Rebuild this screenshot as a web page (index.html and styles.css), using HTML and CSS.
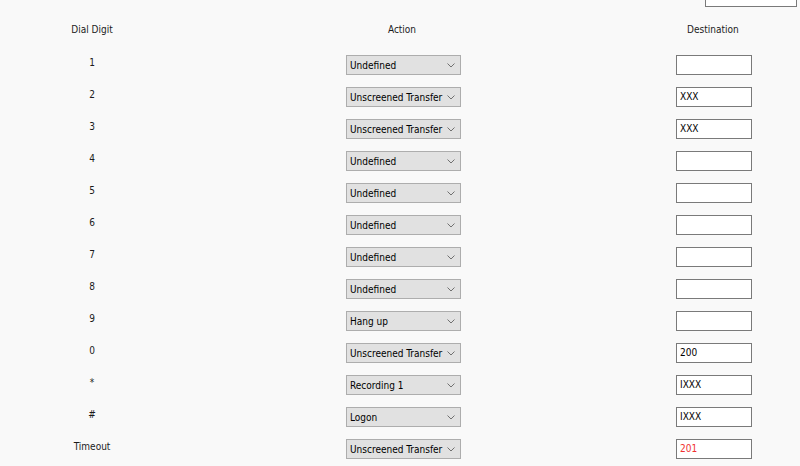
FILE: index.html
```html
<!DOCTYPE html>
<html>
<head>
<meta charset="utf-8">
<link rel="stylesheet" href="styles.css">
</head>
<body>
<div class="topbar"><div class="topbox"></div></div>
<div class="grid">
  <div class="hdr c1">Dial Digit</div>
  <div class="hdr c2">Action</div>
  <div class="hdr c3">Destination</div>

  <div class="lbl">1</div>
  <div class="sel"><span>Undefined</span><svg class="chev" width="8" height="5" viewBox="0 0 8 5"><path d="M0.5 0.5 L4 4 L7.5 0.5" fill="none" stroke="#707070" stroke-width="1"/></svg></div>
  <div class="dst"><div class="inp"></div></div>

  <div class="lbl">2</div>
  <div class="sel"><span>Unscreened Transfer</span><svg class="chev" width="8" height="5" viewBox="0 0 8 5"><path d="M0.5 0.5 L4 4 L7.5 0.5" fill="none" stroke="#707070" stroke-width="1"/></svg></div>
  <div class="dst"><div class="inp">XXX</div></div>

  <div class="lbl">3</div>
  <div class="sel"><span>Unscreened Transfer</span><svg class="chev" width="8" height="5" viewBox="0 0 8 5"><path d="M0.5 0.5 L4 4 L7.5 0.5" fill="none" stroke="#707070" stroke-width="1"/></svg></div>
  <div class="dst"><div class="inp">XXX</div></div>

  <div class="lbl">4</div>
  <div class="sel"><span>Undefined</span><svg class="chev" width="8" height="5" viewBox="0 0 8 5"><path d="M0.5 0.5 L4 4 L7.5 0.5" fill="none" stroke="#707070" stroke-width="1"/></svg></div>
  <div class="dst"><div class="inp"></div></div>

  <div class="lbl">5</div>
  <div class="sel"><span>Undefined</span><svg class="chev" width="8" height="5" viewBox="0 0 8 5"><path d="M0.5 0.5 L4 4 L7.5 0.5" fill="none" stroke="#707070" stroke-width="1"/></svg></div>
  <div class="dst"><div class="inp"></div></div>

  <div class="lbl">6</div>
  <div class="sel"><span>Undefined</span><svg class="chev" width="8" height="5" viewBox="0 0 8 5"><path d="M0.5 0.5 L4 4 L7.5 0.5" fill="none" stroke="#707070" stroke-width="1"/></svg></div>
  <div class="dst"><div class="inp"></div></div>

  <div class="lbl">7</div>
  <div class="sel"><span>Undefined</span><svg class="chev" width="8" height="5" viewBox="0 0 8 5"><path d="M0.5 0.5 L4 4 L7.5 0.5" fill="none" stroke="#707070" stroke-width="1"/></svg></div>
  <div class="dst"><div class="inp"></div></div>

  <div class="lbl">8</div>
  <div class="sel"><span>Undefined</span><svg class="chev" width="8" height="5" viewBox="0 0 8 5"><path d="M0.5 0.5 L4 4 L7.5 0.5" fill="none" stroke="#707070" stroke-width="1"/></svg></div>
  <div class="dst"><div class="inp"></div></div>

  <div class="lbl">9</div>
  <div class="sel"><span>Hang up</span><svg class="chev" width="8" height="5" viewBox="0 0 8 5"><path d="M0.5 0.5 L4 4 L7.5 0.5" fill="none" stroke="#707070" stroke-width="1"/></svg></div>
  <div class="dst"><div class="inp"></div></div>

  <div class="lbl">0</div>
  <div class="sel"><span>Unscreened Transfer</span><svg class="chev" width="8" height="5" viewBox="0 0 8 5"><path d="M0.5 0.5 L4 4 L7.5 0.5" fill="none" stroke="#707070" stroke-width="1"/></svg></div>
  <div class="dst"><div class="inp">200</div></div>

  <div class="lbl">*</div>
  <div class="sel"><span>Recording 1</span><svg class="chev" width="8" height="5" viewBox="0 0 8 5"><path d="M0.5 0.5 L4 4 L7.5 0.5" fill="none" stroke="#707070" stroke-width="1"/></svg></div>
  <div class="dst"><div class="inp">IXXX</div></div>

  <div class="lbl">#</div>
  <div class="sel"><span>Logon</span><svg class="chev" width="8" height="5" viewBox="0 0 8 5"><path d="M0.5 0.5 L4 4 L7.5 0.5" fill="none" stroke="#707070" stroke-width="1"/></svg></div>
  <div class="dst"><div class="inp">IXXX</div></div>

  <div class="lbl">Timeout</div>
  <div class="sel"><span>Unscreened Transfer</span><svg class="chev" width="8" height="5" viewBox="0 0 8 5"><path d="M0.5 0.5 L4 4 L7.5 0.5" fill="none" stroke="#707070" stroke-width="1"/></svg></div>
  <div class="dst"><div class="inp red">201</div></div>
</div>
</body>
</html>
```
FILE: styles.css
```css
html, body {
  margin: 0;
  padding: 0;
  background: #f9f9f9;
  font-family: "DejaVu Sans Condensed", "Liberation Sans", Arial, sans-serif;
  font-size: 10px;
  color: #1b1b1b;
  overflow: hidden;
}
.topbar {
  display: flex;
  justify-content: flex-end;
  padding-right: 3px;
}
.topbox {
  width: 90px;
  height: 6px;
  border: 1px solid #7a7a7a;
  border-top: none;
  background: #fff;
}
.grid {
  display: grid;
  grid-template-columns: 184px 439px 1fr;
  grid-template-rows: 32px;
  grid-auto-rows: 32px;
  margin-top: 16px;
}
.hdr {
  line-height: 13px;
  height: 13px;
  white-space: nowrap;
}
.hdr.c1, .hdr.c2 { text-align: center; }
.hdr.c2 { padding-right: 3px; }
.hdr.c3 { padding-left: 64px; }
.lbl {
  text-align: center;
  line-height: 13px;
  padding-top: 1px;
  white-space: nowrap;
}
.sel {
  justify-self: center;
  height: 18px;
  width: 105px;
  border: 1px solid #adadad;
  background: #e1e1e1;
  display: flex;
  align-items: center;
  padding: 0 5px 0 3px;
  color: #000;
  white-space: nowrap;
  overflow: hidden;
}
.chev { display: block; flex: none; margin-left: auto; }
.dst {
  padding-left: 53px;
}
.inp {
  width: 71px;
  height: 18px;
  border: 1px solid #7a7a7a;
  background: #fff;
  line-height: 18px;
  padding-left: 3px;
  color: #000;
}
.inp.red { color: #f03030; }
```
